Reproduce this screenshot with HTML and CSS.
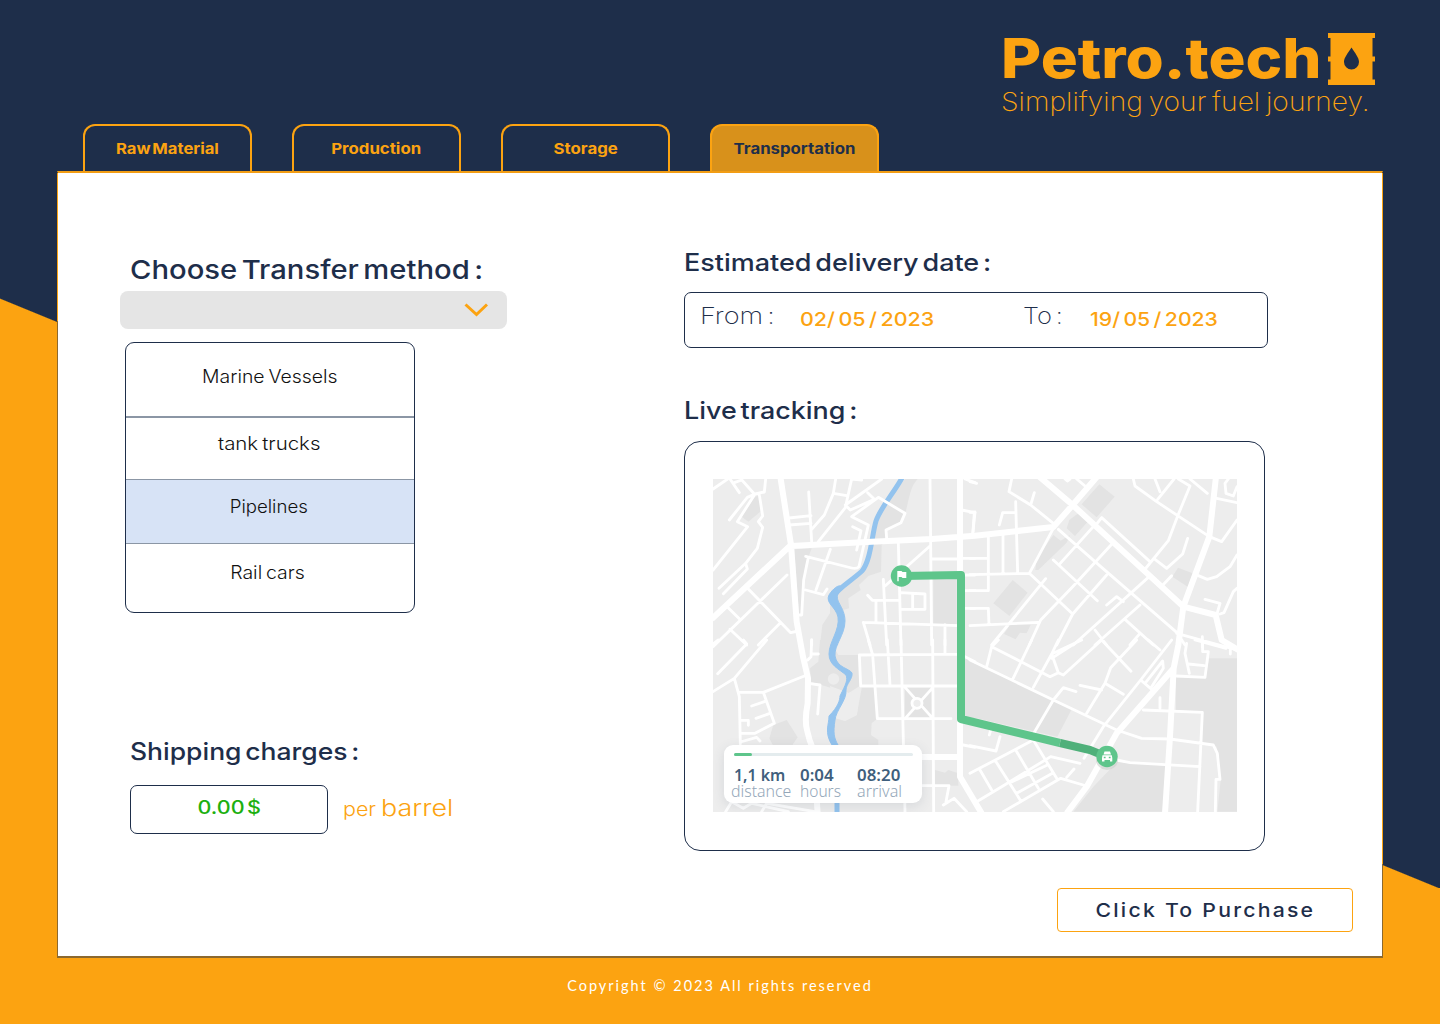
FILE: index.html
```html
<!DOCTYPE html>
<html lang="en">
<head>
<meta charset="utf-8">
<title>Petro.tech – Transportation</title>
<link rel="stylesheet" href="styles.css">
</head>
<body>
<div class="page">
  <header class="header">
    <div class="brand">
      <div class="brand-row">
        <h1 class="brand-name"><span class="fit f-brand">Petro.tech</span></h1>
        <svg class="barrel" viewBox="0 0 47 52" width="47" height="52">
          <path fill="#fca311" fill-rule="evenodd" d="M0 0H47V5H44.500V23.500H47V28.500H44.500V46.500H47V52H0V46.500H2.500V28.500H0V23.500H2.500V5H0ZM23.500 14.500C20 20 16 24.500 16 29A7.500 7.500 0 0 0 31 29C31 24.500 27 20 23.500 14.500Z"/>
        </svg>
      </div>
      <p class="tagline"><span class="fit f-tag">Simplifying your fuel journey.</span></p>
    </div>
    <nav class="tabs">
      <a class="tab"><span class="fit f-raw">Raw Material</span></a>
      <a class="tab"><span class="fit f-tab">Production</span></a>
      <a class="tab"><span class="fit f-tab">Storage</span></a>
      <a class="tab active"><span class="fit f-tab">Transportation</span></a>
    </nav>
  </header>

  <main class="panel">
    <section class="left">
      <h2 class="title title-lg"><span class="fit f-title">Choose Transfer method :</span></h2>
      <div class="select">
        <svg width="24" height="14" viewBox="0 0 24 14"><path d="M1.500 1.500L12.500 11.500L23 1.500" fill="none" stroke="#fca311" stroke-width="3"/></svg>
      </div>
      <ul class="options">
        <li class="option o1"><span class="fit f-opt">Marine Vessels</span></li>
        <li class="option o2"><span class="fit f-trucks">tank trucks</span></li>
        <li class="option o3"><span class="fit f-pipes">Pipelines</span></li>
        <li class="option o4"><span class="fit f-rail">Rail cars</span></li>
      </ul>
      <h2 class="title shipping"><span class="fit f-ship">Shipping charges :</span></h2>
      <div class="charge">
        <div class="price"><span class="fit f-price">0.00 $</span></div>
        <div class="unit"><span class="per"><span class="fit f-per">per</span></span><span class="fit f-barrel">barrel</span></div>
      </div>
    </section>

    <section class="right">
      <h2 class="title"><span class="fit f-title">Estimated delivery date :</span></h2>
      <div class="dates">
        <span class="date-label"><span class="fit f-from">From :</span></span>
        <span class="date-value"><span class="fit f-date">02/ 05 / 2023</span></span>
        <span class="date-label to"><span class="fit f-to">To :</span></span>
        <span class="date-value"><span class="fit f-date2">19/ 05 / 2023</span></span>
      </div>
      <h2 class="title live"><span class="fit f-live">Live tracking :</span></h2>
      <div class="map-card">
        <div class="map">
          <svg class="map-art" viewBox="713 479 524 333" width="524" height="333">
            <rect x="713" y="479" width="524" height="333" fill="#ededed"/>
            <!-- parks and built-up areas -->
            <g fill="#e3e3e3">
              <g transform="translate(705 470) scale(.33333)">
                <path d="M600 27H638C615 50 612 90 602 125L588 158L545 182V212L530 225L528 305L490 318L462 345L467 360L430 385L432 415L415 420L400 525H345L352 465L375 430V380L470 310L500 210L515 140Z"/>
                <path d="M110 140L150 80L168 75L166 125L130 155ZM268 238L320 235L300 290L290 435H282ZM685 325H755V462H685Z"/>
              </g>
              <g transform="translate(970 470) scale(.33333)">
                <path d="M388 43L434 80L380 142L335 103ZM325 130L353 155L315 198L290 175L298 150ZM250 195L272 212L300 195L290 218L205 300H196L200 265ZM128 330L173 368L118 438L70 400ZM120 464L182 464L170 490L150 488L137 508L102 492ZM624 293L668 310L655 352L607 320Z"/>
              </g>
              <g transform="translate(705 640) scale(.33333)">
                <path d="M345 0H375L400 45H465V140H508L516 236L500 250L498 285L520 300V320H395L370 290L375 230L420 243L455 225L470 145L465 137L430 160L318 125L315 85L340 65ZM205 255L245 240L278 292L260 318H205L193 295ZM600 142H684V236H600ZM690 390L720 398L730 390L760 400V437H690ZM780 50L810 65V235H780Z"/>
              </g>
              <g transform="translate(970 640) scale(.33333)">
                <path d="M0 60L250 180L305 208L262 290L0 230ZM718 55H801V515H742L752 420L740 320L697 312V215L618 210V112H705ZM442 365L590 375L580 515H310L370 440Z"/>
              </g>
            </g>
            <path d="M830 686L849 693L860 689L857 715L845 721L833 716Z" fill="#ededed"/>
            <circle cx="833.500" cy="679" r="5.700" fill="#ededed"/>
            <!-- river -->
            <g fill="none" stroke="#93c3ee">
              <path d="M902 478C893 494 881 507 876 521C872 534 871 560 862 571C850 582 838 588 833 597" stroke-width="5"/>
              <path d="M829 595C835 585 845 582 839 592C833 601 845 606 845 621C845 635 834 645 835 656C837 668 849 668 852 673C853 679 846 684 846 690C847 700 836 710 835 720C833 733 834 738 838 745H832C824 732 829 725 829 716C838 707 840 700 840 696C846 684 848 680 846 675C839 669 829 665 829 654C829 642 840 630 838 617C836 607 825 603 829 595Z" fill="#93c3ee" stroke-width="1"/>
              <path d="M837 800V813" stroke-width="5"/>
            </g>
            <!-- side streets -->
            <g fill="none" stroke="#fff" stroke-width="8.500" stroke-linecap="round" stroke-linejoin="round">
              <g transform="translate(705 470) scale(.33333)">
                <path d="M24 57L68 27M75 27L103 68M88 38L110 30M108 27L148 72M182 27L178 66L150 72L127 82L73 150M150 72L97 155L128 170L24 300M163 75L173 138L160 155L173 172L157 235L122 280L42 355M122 280L127 297L55 371M311 66L320 215M252 144L318 137M252 165L318 160M392 27L385 70L358 135L320 178M385 70L425 77M440 27L421 113L340 215M440 27L470 30M530 27L421 105L436 120L508 88L488 68M440 140L520 82L600 130L588 158L543 180L545 205M440 140L490 165L462 290Q455 298 440 294L302 259M443 170L468 182L455 240M376 238L333 360M310 262L296 330L290 435H280M302 360L355 374L366 357M246 315L24 530M130 357L257 488L280 483M68 412L103 446M225 460L160 525M75 478L125 525M320 510V525M675 27L680 525M580 218L588 525M675 228L540 348M535 328L545 525M488 376L502 391H580M513 395V455M588 368L660 372V418H590M623 370V415M475 457L760 467M475 457L495 525M680 267H760M720 465V525M770 120L810 128M808 128L803 197M770 265H810M775 315H810M780 362H810M780 415H810M780 27L810 38"/>
              </g>
              <g transform="translate(970 470) scale(.33333)">
                <path d="M0 35L20 40M0 127L15 126L8 195M125 27L117 65L182 105L250 160M193 68L182 105M137 95L143 310M88 165L98 128H137M99 190V310M55 200V362H0M0 265H55M0 314L178 310L250 175M178 310L308 432L260 525M0 415H55L57 465M0 467L205 457M227 326L65 525M265 178L375 275L620 487L645 525M370 170L268 283M250 270L382 392M425 223L308 350L212 450L178 525M410 315L308 432M410 405L440 380L460 395M535 322L310 525M510 405L375 525M465 448L550 525M375 480L410 525M510 490L480 525M395 143L540 275M375 168L395 143M490 27L495 48L560 95L718 200L755 215L801 150M555 27L570 65M612 27L563 88M625 27L660 48L623 138L595 212L523 300M660 27L712 70M555 268L590 295L638 252L653 205M578 346L605 317M685 317L712 328L740 320L780 290L801 255M740 85L801 98M775 27L765 40L768 70L790 78L801 50M705 388L750 400L740 435M750 432L762 428L790 365L801 355M620 490L801 540M697 500V530M285 27L292 33L300 27M320 27L345 48"/>
              </g>
              <g transform="translate(705 640) scale(.33333)">
                <path d="M115 0L125 12L38 101M24 12L40 0M185 0L88 115L24 155M88 115L103 170L106 312M103 157H175L298 108M175 157L208 250L150 280H106M140 198L180 184M153 235L195 220M106 241H130V256M106 306L155 292L165 303M320 0L318 50L308 60M318 42H340M310 130L345 135L338 222M463 45L680 43H760M463 45L467 138H760M490 0L503 45L517 236H738M547 0L555 135M588 0L600 515M683 0L686 515M600 142L684 236M684 142L600 236M720 0V42M650 437H732L723 485M715 495L747 475L785 515M780 50L810 65M775 315L810 322M62 515L80 485L115 505L140 490L250 515M170 515L185 490L330 515"/>
                <circle cx="636" cy="190" r="15" fill="#ededed"/>
              </g>
              <g transform="translate(970 640) scale(.33333)">
                <path d="M0 60L250 180L440 270L515 295L600 297L730 315L742 340L750 418H738L736 515M50 80L65 20L85 0M65 20L240 110L265 98L245 42L265 0M128 118L185 0M190 142L245 42L335 0M245 55L330 0M265 98L280 105L395 0L483 94M500 0L422 83L405 130L350 220M330 136L395 150M405 130L460 163M605 0L512 120L400 260L342 355M512 120L545 148M525 130L578 63L580 85L545 140M535 0L570 30M318 155L280 143L250 180L190 282M0 317L78 333L90 290M62 270L58 285M0 400L190 300L260 415M20 485L100 437L242 350L330 370M100 515L272 415L350 438M290 412L312 387M30 390L65 450M78 365L152 482M137 330L205 445M120 428L232 375M140 460L250 398M218 477L250 515M520 210L697 217L683 515M570 173V205M440 360L480 368L690 380M620 108L705 112L715 35H698L697 0M650 10L645 40L658 100M655 72L703 77M675 0L768 25M781 20V42"/>
              </g>
            </g>
            <!-- main roads -->
            <g fill="none" stroke="#fff" stroke-linejoin="round">
              <g transform="translate(705 470) scale(.33333)" stroke-width="18">
                <path d="M226 20L258 225L275 455L294 560L309 625L308 700Q298 750 306 780Q312 810 325 840L338 1030M258 225L20 447M258 228L500 215L680 207L810 197L1045 171L1103 105L1178 18M1003 20L1103 105L1435 410L1532 435L1550 510L1600 540M1533 20L1513 200L1435 410L1420 525L1406 595L1395 800L1380 1030M1406 595L1235 790L1145 950L1085 1030M765 20V920L830 1030M650 861H765"/>
              </g>
            </g>
            <!-- route -->
            <g fill="none" stroke="#5ec58b" stroke-width="8" stroke-linejoin="round">
              <path d="M902 576L961 575V719L1060 743"/>
              <path d="M1060 743L1090 750L1107 757" stroke="#4fb07a"/>
            </g>
            <ellipse cx="1107" cy="760" rx="11" ry="10" fill="#c9d1cc" opacity=".6"/>
            <circle cx="901.500" cy="576" r="10.700" fill="#5ec58b"/>
            <path d="M897.300 581.300V571H901.500L902.500 572H906.300V578H902.500L901.500 577H898.700V581.300Z" fill="#fff"/>
            <circle cx="1107" cy="756.500" r="10.700" fill="#5ec58b"/>
            <path fill="#fff" fill-rule="evenodd" d="M1104.500 751.500H1110L1111 754.500H1103.500ZM1102.500 755.300H1111.800L1112.300 758V761.500H1110V760H1104.500V761.500H1102V758ZM1103.800 756.800V758.200H1105.600V756.800ZM1108.800 756.800V758.200H1110.600V756.800Z"/>
          </svg>
          <div class="trip">
            <div class="progress"><div class="progress-done"></div></div>
            <dl class="stats">
              <div class="stat"><dt><span class="fit f-km">1,1 km</span></dt><dd class="dist"><span class="fit f-km">distance</span></dd></div>
              <div class="stat"><dt><span class="fit f-num">0:04</span></dt><dd><span class="fit">hours</span></dd></div>
              <div class="stat"><dt><span class="fit f-num">08:20</span></dt><dd><span class="fit f-arr">arrival</span></dd></div>
            </dl>
          </div>
        </div>
      </div>
      <button class="buy"><span class="fit f-buy">Click To Purchase</span></button>
    </section>
  </main>
  <footer class="footer"><span class="fit">Copyright © 2023 All rights reserved</span></footer>
</div>
</body>
</html>
```
FILE: styles.css
```css
* { box-sizing: border-box; margin: 0; padding: 0; }

body {
  font-family: Inter, "Liberation Sans", sans-serif;
  color: #1e2e4a;
}

.page {
  width: 1440px;
  height: 1024px;
  display: flex;
  flex-direction: column;
  overflow: hidden;
  background: linear-gradient(to bottom left, #1e2e4a 50%, #fca311 50.100%) 0 298px / 1440px 590px no-repeat,
    linear-gradient(#1e2e4a 298px, #fca311 298px);
}

/* extended letterforms */
.fit { display: inline-block; white-space: pre; transform-origin: left center; }
.f-brand { transform: scaleX(1.112); }
.f-tag { word-spacing: -2px; transform: scaleX(1.085); }
.f-raw { word-spacing: -2px; transform: scaleX(1.108); }
.f-tab { transform: scaleX(1.118); }
.f-title { word-spacing: -3px; transform: scaleX(1.124); }
.f-opt { word-spacing: -1.500px; transform: scaleX(1.078); }
.f-trucks { word-spacing: -1.500px; transform: scaleX(1.135); }
.f-pipes { transform: scaleX(1.035); }
.f-rail { word-spacing: -1.500px; transform: scaleX(1.080); }
.f-ship { word-spacing: -3px; transform: scaleX(1.104); }
.f-price { word-spacing: -3px; transform: scaleX(1.165); }
.f-per { transform: scaleX(1.130); }
.f-barrel { transform: scaleX(1.170); }
.f-from { word-spacing: -3px; transform: scaleX(1.180); }
.f-to { word-spacing: -3px; transform: scaleX(1.110); }
.f-date { word-spacing: -2px; transform: scaleX(1.130); }
.f-date2 { word-spacing: -2px; transform: scaleX(1.115); }
.f-live { word-spacing: -3px; transform: scaleX(1.120); }
.f-km { transform: scaleX(1.025); }
.f-num { transform: scaleX(1.090); }
.f-arr { transform: scaleX(1.040); }
.f-buy { transform: scaleX(1.117); }

.header { height: 171px; display: flex; flex-direction: column; flex: none; }
.brand { height: 124px; padding: 30px 0 0 1001px; color: #fca311; }
.brand-row { display: flex; height: 56px; }
.brand-name { width: 326.500px; font-size: 55.500px; line-height: 56px; font-weight: 800; }
.barrel { margin-top: 3px; }
.tagline { font-size: 26px; line-height: 32px; font-weight: 200; }

.tabs { display: flex; gap: 40px; padding-left: 83px; height: 47px; }
.tab {
  width: 169px;
  border: 2px solid #fca311;
  border-bottom: 0;
  border-radius: 12px 12px 0 0;
  color: #fca311;
  font-size: 15px;
  line-height: 46px;
  font-weight: 700;
  text-align: center;
}
.tab.active { background: #d8911b; color: #1e2e4a; }
.tab .fit, .option .fit, .price .fit, .buy .fit, .footer .fit { transform-origin: center; }

.panel {
  flex: none;
  width: 1326px;
  height: 787px;
  margin-left: 57px;
  border: 1px solid transparent;
  border-top: 2px solid #f29d14;
  border-bottom: 2px solid #8c692f;
  background:
    linear-gradient(#fff, #fff) padding-box,
    linear-gradient(#fca311 150px, #8c692f 150px) left / 50% 100% no-repeat border-box,
    linear-gradient(#fca311 693px, #8c692f 693px) right / 50% 100% no-repeat border-box;
  display: flex;
}

.left { width: 626px; padding: 77px 0 0 62px; }
.title { font-size: 24px; line-height: 40px; height: 40px; font-weight: 500; }
.title-lg { font-size: 26px; padding-left: 9.500px; height: 41px; }
.select {
  width: 387px;
  height: 38px;
  border-radius: 8px;
  background: #e5e5e5;
  display: flex;
  justify-content: flex-end;
  padding: 12px 19px 0 0;
}
.options {
  list-style: none;
  width: 290px;
  height: 271px;
  margin: 13px 0 0 5px;
  border: 1px solid #1e2e4a;
  border-radius: 9px;
  overflow: hidden;
  color: #111;
  font-size: 18px;
  line-height: 20px;
  font-weight: 300;
  text-align: center;
}
.option { border-bottom: 1px solid #8b96a5; }
.o1 { height: 75px; padding-top: 24px; border-bottom-width: 2px; }
.o2 { height: 62px; padding: 16px 2px 0 0; }
.o3 { height: 64px; padding: 17px 2px 0 0; background: #d7e3f6; }
.o4 { padding: 19px 4px 0 0; border: 0; }

.shipping { margin: 119px 0 0 9.500px; }
.charge { display: flex; margin: 13px 0 0 10px; }
.price {
  width: 198px;
  height: 49px;
  border: 1px solid #1e2e4a;
  border-radius: 7px;
  color: #1db010;
  font-size: 18.500px;
  line-height: 43px;
  font-weight: 500;
  text-align: center;
}
.unit { display: flex; padding-left: 15px; color: #fca311; font-weight: 300; font-size: 23px; line-height: 46px; }
.per { width: 38px; font-size: 19px; line-height: 49px; }

.right { width: 697px; padding-top: 70px; }
.dates {
  display: flex;
  width: 584px;
  height: 56px;
  margin-top: 9px;
  padding-left: 15px;
  border: 1px solid #1e2e4a;
  border-radius: 7px;
}
.date-label { flex: none; width: 100px; font-size: 23px; line-height: 46px; font-weight: 200; }
.date-value { flex: none; width: 223px; font-size: 19px; line-height: 53px; font-weight: 500; color: #fca311; }
.date-value:last-child { width: 150px; }
.date-label.to { width: 67px; }
.live { margin-top: 43px; }
.map-card {
  width: 581px;
  height: 410px;
  margin-top: 10px;
  padding: 37px 28px;
  border: 1px solid #1e2e4a;
  border-radius: 16px;
}
.map { position: relative; width: 524px; height: 333px; overflow: hidden; }
.map-art { display: block; }
.trip {
  position: absolute;
  left: 11px;
  top: 266px;
  width: 198px;
  height: 58px;
  padding: 8px 0 0 10px;
  border-radius: 9px;
  background: #fff;
  box-shadow: 0 3px 12px rgba(60, 80, 100, .13);
  font-family: "Noto Sans", sans-serif;
}
.progress { width: 179px; height: 3px; border-radius: 2px; background: #e4ecee; }
.progress-done { width: 18px; height: 3px; border-radius: 2px; background: #5ec58b; }
.stats { display: flex; padding-top: 11px; }
.stat { width: 66px; }
.stat + .stat { width: 57px; }
.stat dt { height: 16px; font-size: 15.500px; line-height: 16px; font-weight: 600; color: #3f5f7d; }
.stat dd { height: 16px; font-size: 15.500px; line-height: 16px; font-weight: 300; color: #94a7b9; }
.stat .dist { margin-left: -3px; }

.buy {
  display: block;
  width: 296px;
  height: 44px;
  margin: 37px 0 0 373px;
  padding-top: 1px;
  border: 1px solid #fca311;
  border-radius: 4px;
  background: #fff;
  color: #1e2e4a;
  font: 500 19px/42px Inter, sans-serif;
  letter-spacing: 2px;
  text-align: center;
}
.footer {
  padding-top: 18px;
  color: #fff;
  font-family: Lato, sans-serif;
  font-size: 14.500px;
  line-height: 20px;
  letter-spacing: 2px;
  text-align: center;
}
```
